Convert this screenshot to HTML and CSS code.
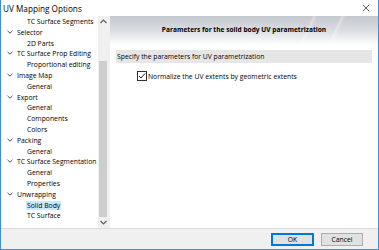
FILE: index.html
```html
<!DOCTYPE html>
<html lang="en">
<head>
    <meta charset="UTF-8">
    <title>UV Mapping Options</title>
    <link rel="stylesheet" href="styles.css">
</head>
<body>
    <div class="window">
        <div class="title-bar">
            <span class="title">UV Mapping Options</span>
            <svg class="close" width="10" height="10" viewBox="0 0 10 10">
                <path d="M1 1 L9 9 M9 1 L1 9" stroke="#333" stroke-width="1"/>
            </svg>
        </div>
        <div class="content">
            <div class="tree-panel">
                <ul class="tree">
                    <li class="leaf">TC Surface Segments</li>
                    <li class="node"><svg class="chevron" width="6" height="4" viewBox="0 0 6 4"><path d="M0.5 0.8 L3 3.2 L5.5 0.8" fill="none" stroke="#505050" stroke-width="1"/></svg>Selector</li>
                    <li class="leaf">2D Parts</li>
                    <li class="node"><svg class="chevron" width="6" height="4" viewBox="0 0 6 4"><path d="M0.5 0.8 L3 3.2 L5.5 0.8" fill="none" stroke="#505050" stroke-width="1"/></svg>TC Surface Prop Editing</li>
                    <li class="leaf">Proportional editing</li>
                    <li class="node"><svg class="chevron" width="6" height="4" viewBox="0 0 6 4"><path d="M0.5 0.8 L3 3.2 L5.5 0.8" fill="none" stroke="#505050" stroke-width="1"/></svg>Image Map</li>
                    <li class="leaf">General</li>
                    <li class="node"><svg class="chevron" width="6" height="4" viewBox="0 0 6 4"><path d="M0.5 0.8 L3 3.2 L5.5 0.8" fill="none" stroke="#505050" stroke-width="1"/></svg>Export</li>
                    <li class="leaf">General</li>
                    <li class="leaf">Components</li>
                    <li class="leaf">Colors</li>
                    <li class="node"><svg class="chevron" width="6" height="4" viewBox="0 0 6 4"><path d="M0.5 0.8 L3 3.2 L5.5 0.8" fill="none" stroke="#505050" stroke-width="1"/></svg>Packing</li>
                    <li class="leaf">General</li>
                    <li class="node"><svg class="chevron" width="6" height="4" viewBox="0 0 6 4"><path d="M0.5 0.8 L3 3.2 L5.5 0.8" fill="none" stroke="#505050" stroke-width="1"/></svg>TC Surface Segmentation</li>
                    <li class="leaf">General</li>
                    <li class="leaf">Properties</li>
                    <li class="node"><svg class="chevron" width="6" height="4" viewBox="0 0 6 4"><path d="M0.5 0.8 L3 3.2 L5.5 0.8" fill="none" stroke="#505050" stroke-width="1"/></svg>Unwrapping</li>
                    <li class="leaf"><span class="selected">Solid Body</span></li>
                    <li class="leaf">TC Surface</li>
                </ul>
                <div class="scrollbar">
                    <svg class="arrow" width="7" height="5" viewBox="0 0 7 5">
                        <path d="M0.5 4 L3.5 1 L6.5 4" fill="none" stroke="#606060" stroke-width="1.2"/>
                    </svg>
                    <div class="track">
                        <div class="thumb"></div>
                    </div>
                    <svg class="arrow" width="7" height="5" viewBox="0 0 7 5">
                        <path d="M0.5 1 L3.5 4 L6.5 1" fill="none" stroke="#606060" stroke-width="1.2"/>
                    </svg>
                </div>
            </div>
            <div class="page">
                <div class="page-header">Parameters for the solid body UV parametrization</div>
                <div class="section">Specify the parameters for UV parametrization</div>
                <label class="option">
                    <span class="checkbox">
                        <svg width="8" height="8" viewBox="0 0 8 8">
                            <path d="M1 4 L3 6 L7 1.5" fill="none" stroke="#222" stroke-width="1"/>
                        </svg>
                    </span>
                    Normalize the UV extents by geometric extents
                </label>
            </div>
        </div>
        <div class="footer">
            <button class="btn default">OK</button>
            <button class="btn">Cancel</button>
        </div>
    </div>
</body>
</html>
```

FILE: styles.css
```css
body {
    margin: 0;
    font-family: "Open Sans", "Noto Sans", sans-serif;
    font-size: 6.8px;
    color: #000;
    background: #fff;
}
.window {
    width: 379px;
    height: 250px;
    box-sizing: border-box;
    border: 1px solid #3c8fdc;
    border-top: none;
    background: #f0f0f0;
    display: flex;
    flex-direction: column;
}
.title-bar {
    height: 16px;
    background: #fff;
    display: flex;
    align-items: center;
    justify-content: space-between;
    padding: 0 8px 0 2px;
}
.title {
    font-size: 8.2px;
}
.close {
    width: 8px;
    height: 8px;
}
.content {
    height: 212px;
    display: flex;
    gap: 2px;
}
.tree-panel {
    width: 107px;
    display: flex;
    background: #fff;
}
.tree {
    list-style: none;
    margin: 0;
    padding: 0 0 0 0;
    flex: 1;
    overflow: hidden;
}
.tree li {
    height: 10.8px;
    line-height: 11.5px;
    white-space: nowrap;
}
.tree .leaf {
    padding-left: 26px;
}
.tree .node {
    padding-left: 6px;
}
.chevron {
    margin-right: 4px;
    vertical-align: 1px;
}
.selected {
    background: #cce8ff;
    padding: 0 1px;
    margin-left: -1px;
}
.scrollbar {
    width: 10px;
    background: #f0f0f0;
    display: flex;
    flex-direction: column;
    align-items: center;
}
.arrow {
    margin: 3px 0;
}
.track {
    flex: 1;
    width: 100%;
    display: flex;
    flex-direction: column;
    justify-content: flex-end;
}
.thumb {
    margin: 0 1px;
    height: 156px;
    background: #cdcdcd;
}
.page {
    flex: 1;
    background: #fff;
}
.page-header {
    height: 29px;
    line-height: 27px;
    text-align: center;
    font-weight: bold;
    font-size: 6.6px;
    background:
        linear-gradient(115deg, transparent 72%, rgba(255,255,255,0.35) 72.5%, transparent 74%),
        linear-gradient(115deg, transparent 82%, rgba(255,255,255,0.35) 82.5%, transparent 84%),
        linear-gradient(to bottom, #c4c9cf 0%, #dadde1 50%, #ffffff 100%);
}
.section {
    margin: 5px 6px 0 6px;
    height: 13px;
    line-height: 13px;
    padding-left: 1px;
    background: #e6e6e6;
}
.option {
    display: flex;
    align-items: center;
    gap: 1px;
    margin: 8px 0 0 27px;
}
.checkbox {
    width: 8px;
    height: 8px;
    border: 1px solid #333;
    display: flex;
    align-items: center;
    justify-content: center;
    background: #fff;
}
.footer {
    flex: 1;
    display: flex;
    justify-content: flex-end;
    align-items: center;
    gap: 7px;
    padding-right: 15px;
    border-top: 1px solid #dcdcdc;
}
.btn {
    width: 42px;
    height: 13px;
    padding: 0;
    font-family: inherit;
    font-size: 6.8px;
    background: #e1e1e1;
    border: 1px solid #adadad;
}
.btn.default {
    border: 1px solid #0078d7;
    box-shadow: inset 0 0 0 1px #0078d7;
    width: 43px;
}
```
